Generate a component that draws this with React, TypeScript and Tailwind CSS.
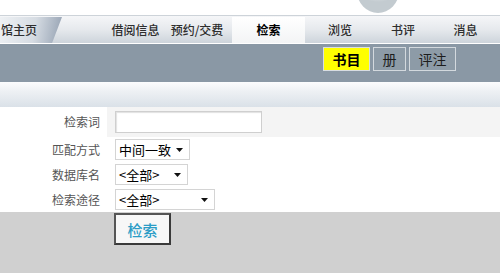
import React from "react";

const font = { fontFamily: '"Noto Sans CJK SC", "Noto Sans", sans-serif' };

function Arrow() {
  return (
    <svg width="7" height="4" viewBox="0 0 7 4" className="shrink-0">
      <polygon points="0,0 7,0 3.5,4" fill="#111" />
    </svg>
  );
}

function FakeSelect({ text, w }: { text: string; w: string }) {
  return (
    <div
      className={`${w} h-[21px] bg-white border border-[#d4d4d4] flex items-center justify-between pl-[3px] pr-[6px] text-[13px] text-black leading-none`}
    >
      <span>{text}</span>
      <Arrow />
    </div>
  );
}

export default function App() {
  return (
    <div className="w-[500px] h-[273px] overflow-hidden bg-white flex flex-col" style={font}>
      {/* top logo strip */}
      <div className="h-[15px] relative shrink-0">
        <svg className="absolute left-[355px] top-0" width="46" height="15" viewBox="0 0 46 15">
          <defs>
            <radialGradient id="lg" cx="50%" cy="0%" r="75%">
              <stop offset="0%" stopColor="#f7f8f9" />
              <stop offset="75%" stopColor="#e3e7ea" />
              <stop offset="100%" stopColor="#c3cbd0" />
            </radialGradient>
          </defs>
          <ellipse cx="23" cy="-9" rx="21" ry="22" fill="url(#lg)" />
        </svg>
      </div>

      {/* nav bar */}
      <div className="h-[29px] shrink-0 border-t border-[#cdd3d9] border-b border-b-white bg-[linear-gradient(#f5f6f8,#e6e9ed_50%,#cdd4db)] flex items-end text-[12px] text-[#2e2e2e] font-medium">
        <div className="w-[62px] h-[26px] flex items-center pl-[1px] bg-[linear-gradient(100deg,#eef1f4,#d6dce3_55%,#93a0b1)] [clip-path:polygon(0_0,100%_0,84%_100%,0_100%)]">
          馆主页
        </div>
        <div className="w-[43px]" />
        <div className="w-[61px] h-[26px] flex items-center justify-center">借阅信息</div>
        <div className="w-[62px] h-[26px] flex items-center justify-center">预约/交费</div>
        <div className="ml-[4px] w-[73px] h-[26px] flex items-center justify-center bg-[linear-gradient(#ffffff,#f3f4f5)] text-black font-bold">
          检索
        </div>
        <div className="w-[70px] h-[26px] flex items-center justify-center">浏览</div>
        <div className="w-[56px] h-[26px] flex items-center justify-center">书评</div>
        <div className="w-[69px] h-[26px] flex items-center justify-center">消息</div>
      </div>

      {/* slate bar with sub tabs */}
      <div className="h-[38px] shrink-0 bg-[#8a98a5] flex items-start pt-[3px] pl-[323px] gap-[3px] text-[14px] leading-none">
        <div className="w-[47px] h-[24px] bg-[#ffff00] border border-[#d8dde2] flex items-center justify-center text-black font-bold">
          书目
        </div>
        <div className="w-[33px] h-[24px] bg-[#8d9ba7] border border-[#d3d9de] flex items-center justify-center text-[#1c1c1c]">
          册
        </div>
        <div className="w-[47px] h-[24px] bg-[#8d9ba7] border border-[#d3d9de] flex items-center justify-center text-[#1c1c1c]">
          评注
        </div>
      </div>

      {/* light strip */}
      <div className="h-[25px] shrink-0 bg-[linear-gradient(#fbfcfd,#eef1f4_35%,#dae1e8)]" />

      {/* form */}
      <div className="flex flex-col text-[12px] text-[#555]">
        <div className="h-[30px] flex">
          <div className="w-[107px] pr-[7px] flex items-center justify-end">检索词</div>
          <div className="flex-1 bg-[#f4f4f4] pl-[8px] flex items-center">
            <div className="w-[147px] h-[22px] bg-white border border-[#cfcfcf] shadow-[inset_1px_1px_1px_#e2e2e2]" />
          </div>
        </div>
        <div className="h-[25px] flex">
          <div className="w-[107px] pr-[7px] flex items-center justify-end">匹配方式</div>
          <div className="pl-[8px] flex items-center">
            <FakeSelect text="中间一致" w="w-[75px]" />
          </div>
        </div>
        <div className="h-[25px] flex">
          <div className="w-[107px] pr-[7px] flex items-center justify-end">数据库名</div>
          <div className="pl-[8px] flex items-center">
            <FakeSelect text="<全部>" w="w-[73px]" />
          </div>
        </div>
        <div className="h-[25px] flex">
          <div className="w-[107px] pr-[7px] flex items-center justify-end">检索途径</div>
          <div className="pl-[8px] flex items-center">
            <FakeSelect text="<全部>" w="w-[100px]" />
          </div>
        </div>
      </div>

      {/* grey bottom with button */}
      <div className="flex-1 bg-[#d0d0d0] pl-[114px] pt-[1px]">
        <div className="w-[57px] h-[32px] bg-[#f7f7f7] border-2 border-[#3a3a3a] border-t-[#555] border-l-[#555] flex items-center justify-center text-[15px] text-[#2a9cc6] font-medium leading-none">
          检索
        </div>
      </div>
    </div>
  );
}
